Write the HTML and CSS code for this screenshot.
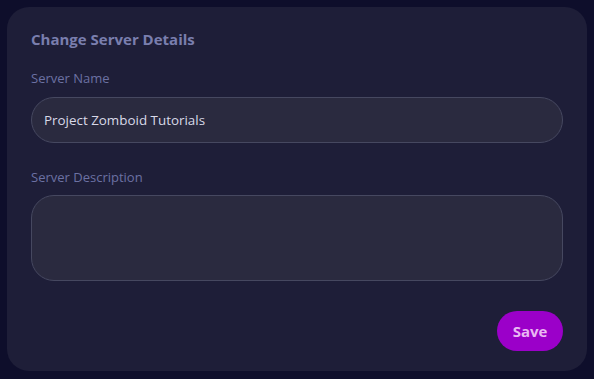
FILE: index.html
```html
<!DOCTYPE html>
<html>
<head>
<meta charset="utf-8">
<link rel="stylesheet" href="styles.css">
</head>
<body>
<div class="card">
  <h2 class="title">Change Server Details</h2>
  <label class="label">Server Name</label>
  <div class="input">Project Zomboid Tutorials</div>
  <label class="label label-desc">Server Description</label>
  <div class="textarea"></div>
  <div class="actions">
    <button class="save">Save</button>
  </div>
</div>
</body>
</html>
```
FILE: styles.css
```css
html, body {
  margin: 0;
  padding: 0;
  background: #0e0e2b;
  width: 594px;
  height: 379px;
  overflow: hidden;
  font-family: "Open Sans", "Noto Sans", sans-serif;
}
.card {
  box-sizing: border-box;
  margin: 7px;
  width: 580px;
  height: 364px;
  background: #1e1e38;
  border-radius: 22px;
  padding: 22px 24px 20px 24px;
  display: flex;
  flex-direction: column;
}
.title {
  margin: 0;
  font-size: 15px;
  font-weight: 700;
  color: #7a7eae;
  line-height: 20px;
}
.label {
  display: block;
  font-size: 13px;
  color: #6c71a3;
  line-height: 18px;
  margin-top: 20px;
}
.label-desc {
  margin-top: 25px;
}
.input {
  box-sizing: border-box;
  margin-top: 10px;
  height: 46px;
  border: 1px solid #464860;
  background: #2a2a3f;
  border-radius: 23px;
  padding: 0 12px;
  display: flex;
  align-items: center;
  font-size: 13.4px;
  color: #d8d9e8;
}
.textarea {
  box-sizing: border-box;
  margin-top: 9px;
  height: 86px;
  border: 1px solid #464860;
  background: #2a2a3f;
  border-radius: 23px;
}
.actions {
  display: flex;
  justify-content: flex-end;
  margin-top: 30px;
}
.save {
  height: 40px;
  width: 66px;
  border: none;
  border-radius: 20px;
  background: #9b00c9;
  color: #e9b8f2;
  font-family: inherit;
  font-size: 15px;
  font-weight: 700;
  padding: 0;
}
```
